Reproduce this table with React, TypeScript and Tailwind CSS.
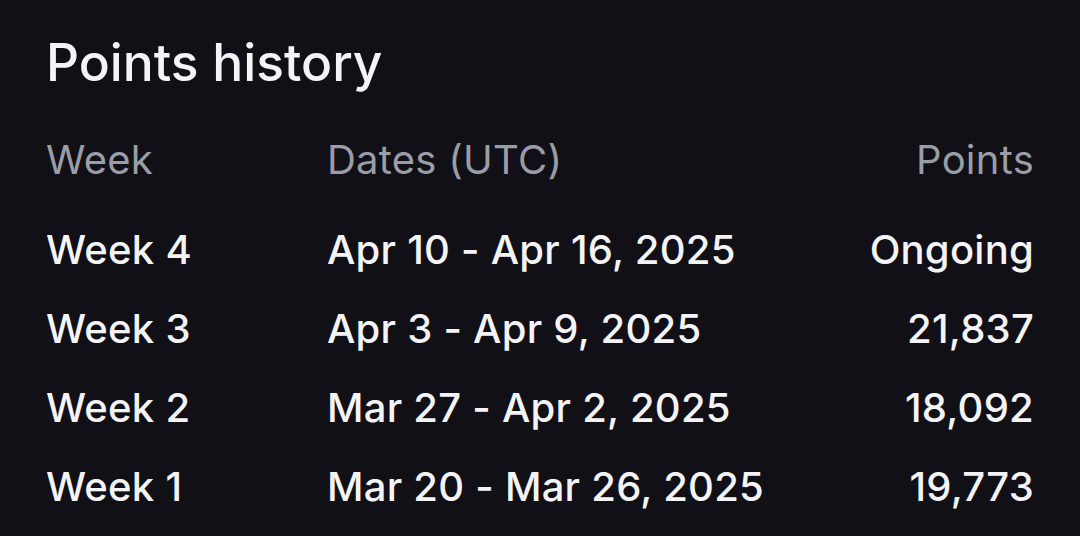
const rows = [
  { week: "Week 4", dates: "Apr 10 - Apr 16, 2025", points: "Ongoing" },
  { week: "Week 3", dates: "Apr 3 - Apr 9, 2025", points: "21,837" },
  { week: "Week 2", dates: "Mar 27 - Apr 2, 2025", points: "18,092" },
  { week: "Week 1", dates: "Mar 20 - Mar 26, 2025", points: "19,773" },
];

export default function App() {
  return (
    <div
      className="h-[536px] w-[1080px] bg-[#101016] px-[46px] pt-[30px] text-[#f4f4f6]"
      style={{ fontFamily: "Inter, sans-serif" }}
    >
      <h1 className="text-[51.5px] font-medium leading-[64px]">Points history</h1>
      <div className="mt-[26px] grid grid-cols-[281px_1fr_auto] text-[40px] leading-[79px] tracking-[0.25px]">
        <div className="mb-[11px] text-[#9a9da6]">Week</div>
        <div className="mb-[11px] text-[#9a9da6]">Dates (UTC)</div>
        <div className="mb-[11px] text-right text-[#9a9da6]">Points</div>
        {rows.map((r) => (
          <div key={r.week} className="contents font-medium">
            <div>{r.week}</div>
            <div>{r.dates}</div>
            <div className="text-right">{r.points}</div>
          </div>
        ))}
      </div>
    </div>
  );
}
